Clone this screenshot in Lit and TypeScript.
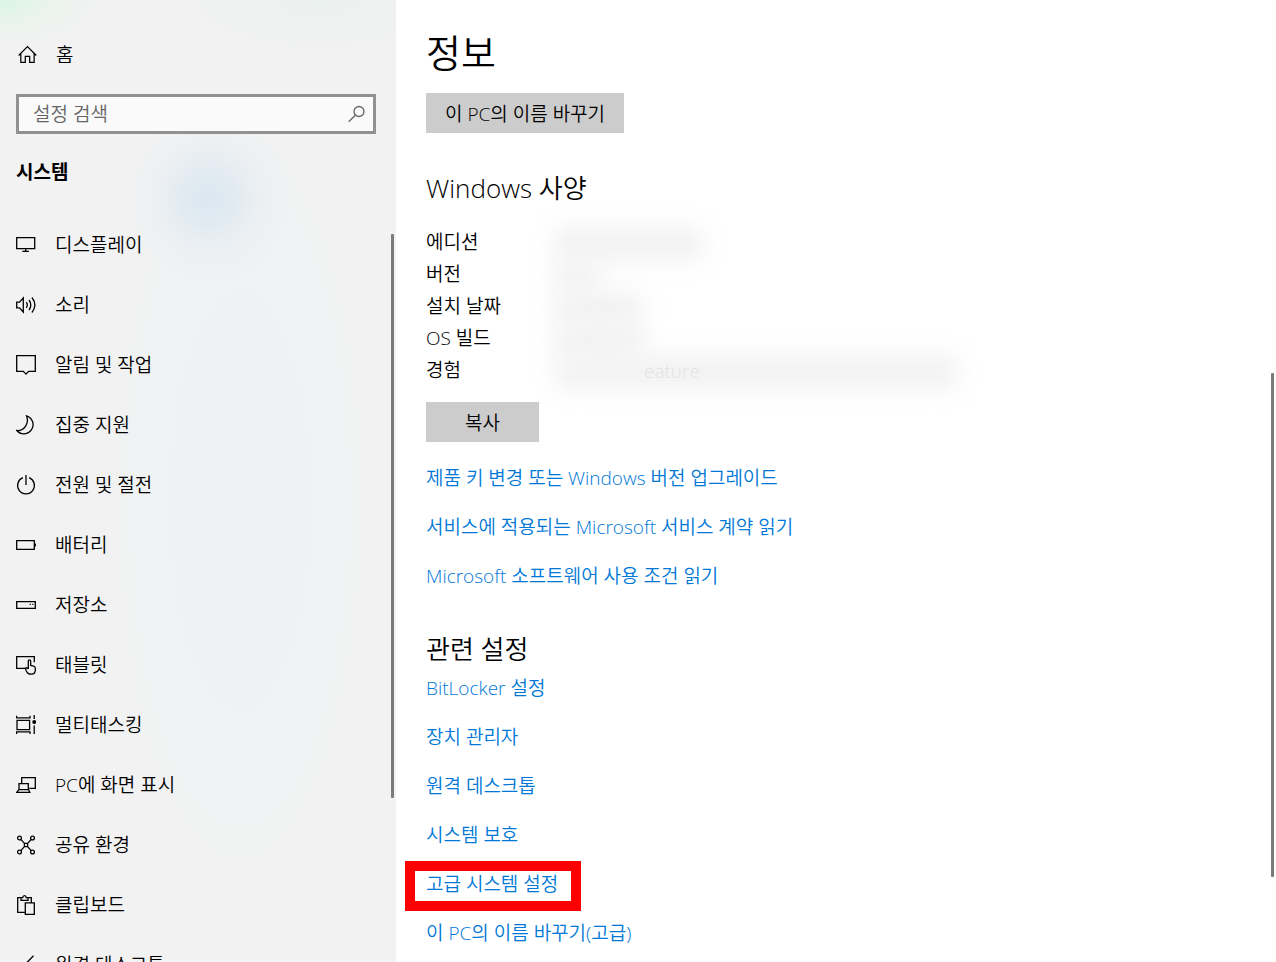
import { LitElement, html, css, svg } from "lit";
import { customElement, property } from "lit/decorators.js";

const icons: Record<string, unknown> = {
  home: svg`<path d="M1.700 11 11 1.700l9.300 9.300M4 9v9.300h4.700v-6.300h4.600v6.300H18V9"/>`,
  display: svg`<path d="M.7 2.700h18v11H.7zM9.700 13.700v2.600M6.300 16.400h6.600"/>`,
  sound: svg`<path d="M.7 7.200h2.800L7.300 3v14l-3.800-4.200H.7zM10.300 7.200q2 2.800 0 5.600M13 5q3.600 5 0 10M15.900 2.500q6 7.500 0 15"/>`,
  notice: svg`<path d="M.7 .7h18.600v15.600h-6.600L10 19l-2.700-2.700H.7z"/>`,
  moon: svg`<path d="M10.500.8A9.200 9.200 0 1 1 .8 15.500C8.500 16 13.500 8 10.500.8z"/>`,
  power: svg`<path d="M10 0v10M6.900 2.700a8.400 8.400 0 1 0 6.200 0"/>`,
  battery: svg`<path d="M.7 5.700h17.600v8.600H.7zM19.300 8.500v3"/>`,
  storage: svg`<path d="M.7 6.700h18.600v6.600H.7zM13.700 9.300h1.200M16.300 9.300h1.200"/>`,
  tablet: svg`<path d="M9 13.300H.7V1.700h17.600v5.600M12.300 14V6.300q0-1.500 1.200-1.500t1.200 1.500v4.200l3 .7q1.600.4 1.600 2V15q0 4.200-4.200 4.200-3.500 0-4.800-3.200l-.9-2.800q1.500-1.200 2.900.8"/>`,
  tasks: svg`<path d="M1 5.300h12.600v9.400H1zM.6 .8v2h13.400v-2M.6 19v-2.200h13.400V19M18.200 0v4M18.200 10.500V19"/><circle cx="18.200" cy="7" r="1.300" fill="currentColor"/>`,
  project: svg`<path d="M5.700 8V2.700h13.600v10.600h-6M3 14.700V8.700h9.300v6M2.800 14.700h9.800l1.200 2.600H.8z"/>`,
  share: svg`<circle cx="3.500" cy="3" r="1.900"/><circle cx="16.500" cy="3" r="1.900"/><circle cx="3.500" cy="17" r="1.900"/><circle cx="16.500" cy="17" r="1.900"/><path d="M8.400 8.400h3.200v3.200H8.400zM4.800 4.400l3.600 4M15.200 4.400l-3.600 4M4.800 15.600l3.600-4M15.200 15.600l-3.600-4"/>`,
  clipboard: svg`<path d="M9.300 17.300H1.700V2.700H5M12 2.700h3.300v4.600M5 5.300V2.700h1.700Q7 .7 8.500.7t1.800 2H12v2.600zM9.300 7.800h9v11.500h-9z"/>`,
  remote: svg`<path d="M.7 8.500 5.500 13 17.500.8M8 19.500 18 10"/>`,
  search: svg`<circle cx="12" cy="7.500" r="5"/><path d="M8.500 11 1.700 17.800"/>`,
};

@customElement("line-icon")
class LineIcon extends LitElement {
  @property() name = "home";
  static styles = css`
    :host { display: block; width: 20px; height: 20px; flex: none; }
    svg { display: block; fill: none; stroke: currentColor; stroke-width: 1.3; }
  `;
  render() {
    const box = this.name === "home" ? "0 0 21 21" : "0 0 20 20";
    return html`<svg width="20" height="20" viewBox=${box} aria-hidden="true">${icons[this.name]}</svg>`;
  }
}

const navItems = [
  ["display", "디스플레이"],
  ["sound", "소리"],
  ["notice", "알림 및 작업"],
  ["moon", "집중 지원"],
  ["power", "전원 및 절전"],
  ["battery", "배터리"],
  ["storage", "저장소"],
  ["tablet", "태블릿"],
  ["tasks", "멀티태스킹"],
  ["project", "PC에 화면 표시"],
  ["share", "공유 환경"],
  ["clipboard", "클립보드"],
  ["remote", "원격 데스크톱"],
];
const specs = ["에디션", "버전", "설치 날짜", "OS 빌드", "경험"];
const productLinks = [
  "제품 키 변경 또는 Windows 버전 업그레이드",
  "서비스에 적용되는 Microsoft 서비스 계약 읽기",
  "Microsoft 소프트웨어 사용 조건 읽기",
];
const relatedLinks = ["BitLocker 설정", "장치 관리자", "원격 데스크톱", "시스템 보호", "고급 시스템 설정", "이 PC의 이름 바꾸기(고급)"];

@customElement("app-root")
class AppRoot extends LitElement {
  static styles = css`
    :host {
      display: flex;
      height: 100vh;
      overflow: hidden;
      background: #fff;
      color: #000;
      font: 350 19px/24px "Open Sans", "Noto Sans CJK KR", sans-serif;
    }
    * { box-sizing: border-box; }
    a { color: inherit; text-decoration: none; }
    h1, h2, ul, dl, dd { margin: 0; padding: 0; font-weight: 350; }
    ul { list-style: none; }
    .side {
      position: relative;
      flex: none;
      width: 396px;
      overflow: hidden;
      padding: 40px 20px 0 16px;
      background:
        radial-gradient(ellipse 110px 50px at 0 0, #d9f5e3, #e6f4eb80 50%, #f2f2f200),
        radial-gradient(circle 85px at 208px 198px, #dae7f0, #dde8f1b0 35%, #e4ecf250 65%, #f2f2f200),
        radial-gradient(ellipse 150px 450px at 240px 500px, #edf1f4, #f2f2f200),
        radial-gradient(ellipse 160px 60px at 320px 0, #ebf1ee, #f2f2f200),
        #f2f2f2;
    }
    .row { display: flex; align-items: center; gap: 19px; }
    .home { height: 30px; }
    .search {
      display: flex;
      align-items: center;
      height: 40px;
      margin: 24px 0 26px;
      padding: 0 6px 0 14px;
      border: 3px solid #919191;
      background: #fafafa;
      color: #666;
    }
    .search input {
      flex: 1;
      min-width: 0;
      padding: 0;
      border: 0;
      outline: 0;
      background: none;
      font: inherit;
    }
    .search input::placeholder { color: #666; opacity: 1; }
    .section { margin: 0 0 31px; font-size: 19px; line-height: 24px; font-weight: 700; }
    .nav .row { height: 60px; }
    .home { padding-left: 1px; }
    .thumb { position: absolute; border-radius: 1px; background: #7a7a7a; width: 3px; }
    .side .thumb { right: 2px; top: 234px; height: 564px; }
    .main { position: relative; flex: 1; min-width: 0; overflow: hidden; padding: 24px 30px 0; }
    .main > .thumb { right: 2px; top: 373px; height: 504px; }
    h1 { font-size: 38px; line-height: 56px; }
    h2 { font-size: 26px; line-height: 36px; }
    button {
      display: block;
      height: 40px;
      padding: 1px 19px 0;
      border: 0;
      background: #ccc;
      color: #000;
      font: inherit;
    }
    .rename { margin: 13px 0 37px; }
    .copy { min-width: 113px; margin: 16px 0 24px; }
    .specs { margin-top: 20px; }
    .specs div { display: grid; grid-template-columns: 128px 1fr; height: 32px; align-items: center; }
    .specs dd { position: relative; height: 32px; line-height: 34px; color: #e2e2e2; }
    .haze { position: absolute; inset: 2px auto -2px 0; border-radius: 12px; background: #f1f1f1; filter: blur(12px); }
    .w0 { width: 150px; } .w1 { width: 44px; } .w2, .w3 { width: 90px; } .w4 { width: 404px; }
    .faint { position: relative; padding-left: 90px; }
    .links { display: grid; gap: 25px; color: #0078d7; }
    .related { margin: 43px 0 9px; }
    .mark { position: relative; }
    .mark::after {
      content: "";
      position: absolute;
      inset: -11px -23px -15px -21px;
      border: 10px solid #f00;
      pointer-events: none;
    }
    .links li { justify-self: start; }
  `;

  render() {
    return html`
      <aside class="side">
        <a class="row home" href="#home"><line-icon name="home"></line-icon>홈</a>
        <label class="search">
          <input type="text" placeholder="설정 검색" aria-label="설정 검색" />
          <line-icon name="search"></line-icon>
        </label>
        <h2 class="section">시스템</h2>
        <nav class="nav">
          ${navItems.map(([icon, label]) => html`<a class="row" href="#${icon}"><line-icon name=${icon}></line-icon>${label}</a>`)}
        </nav>
        <div class="thumb"></div>
      </aside>
      <main class="main">
        <h1>정보</h1>
        <button class="rename">이 PC의 이름 바꾸기</button>
        <h2>Windows 사양</h2>
        <dl class="specs">
          ${specs.map((label, i) => html`<div><dt>${label}</dt><dd><span class="haze w${i}"></span>${i === 4 ? html`<span class="faint">eature</span>` : ""}</dd></div>`)}
        </dl>
        <button class="copy">복사</button>
        <ul class="links">${productLinks.map((t) => html`<li><a href="#product">${t}</a></li>`)}</ul>
        <h2 class="related">관련 설정</h2>
        <ul class="links">
          ${relatedLinks.map((t, i) => html`<li class=${i === 4 ? "mark" : ""}><a href="#related">${t}</a></li>`)}
        </ul>
        <div class="thumb"></div>
      </main>
    `;
  }
}
